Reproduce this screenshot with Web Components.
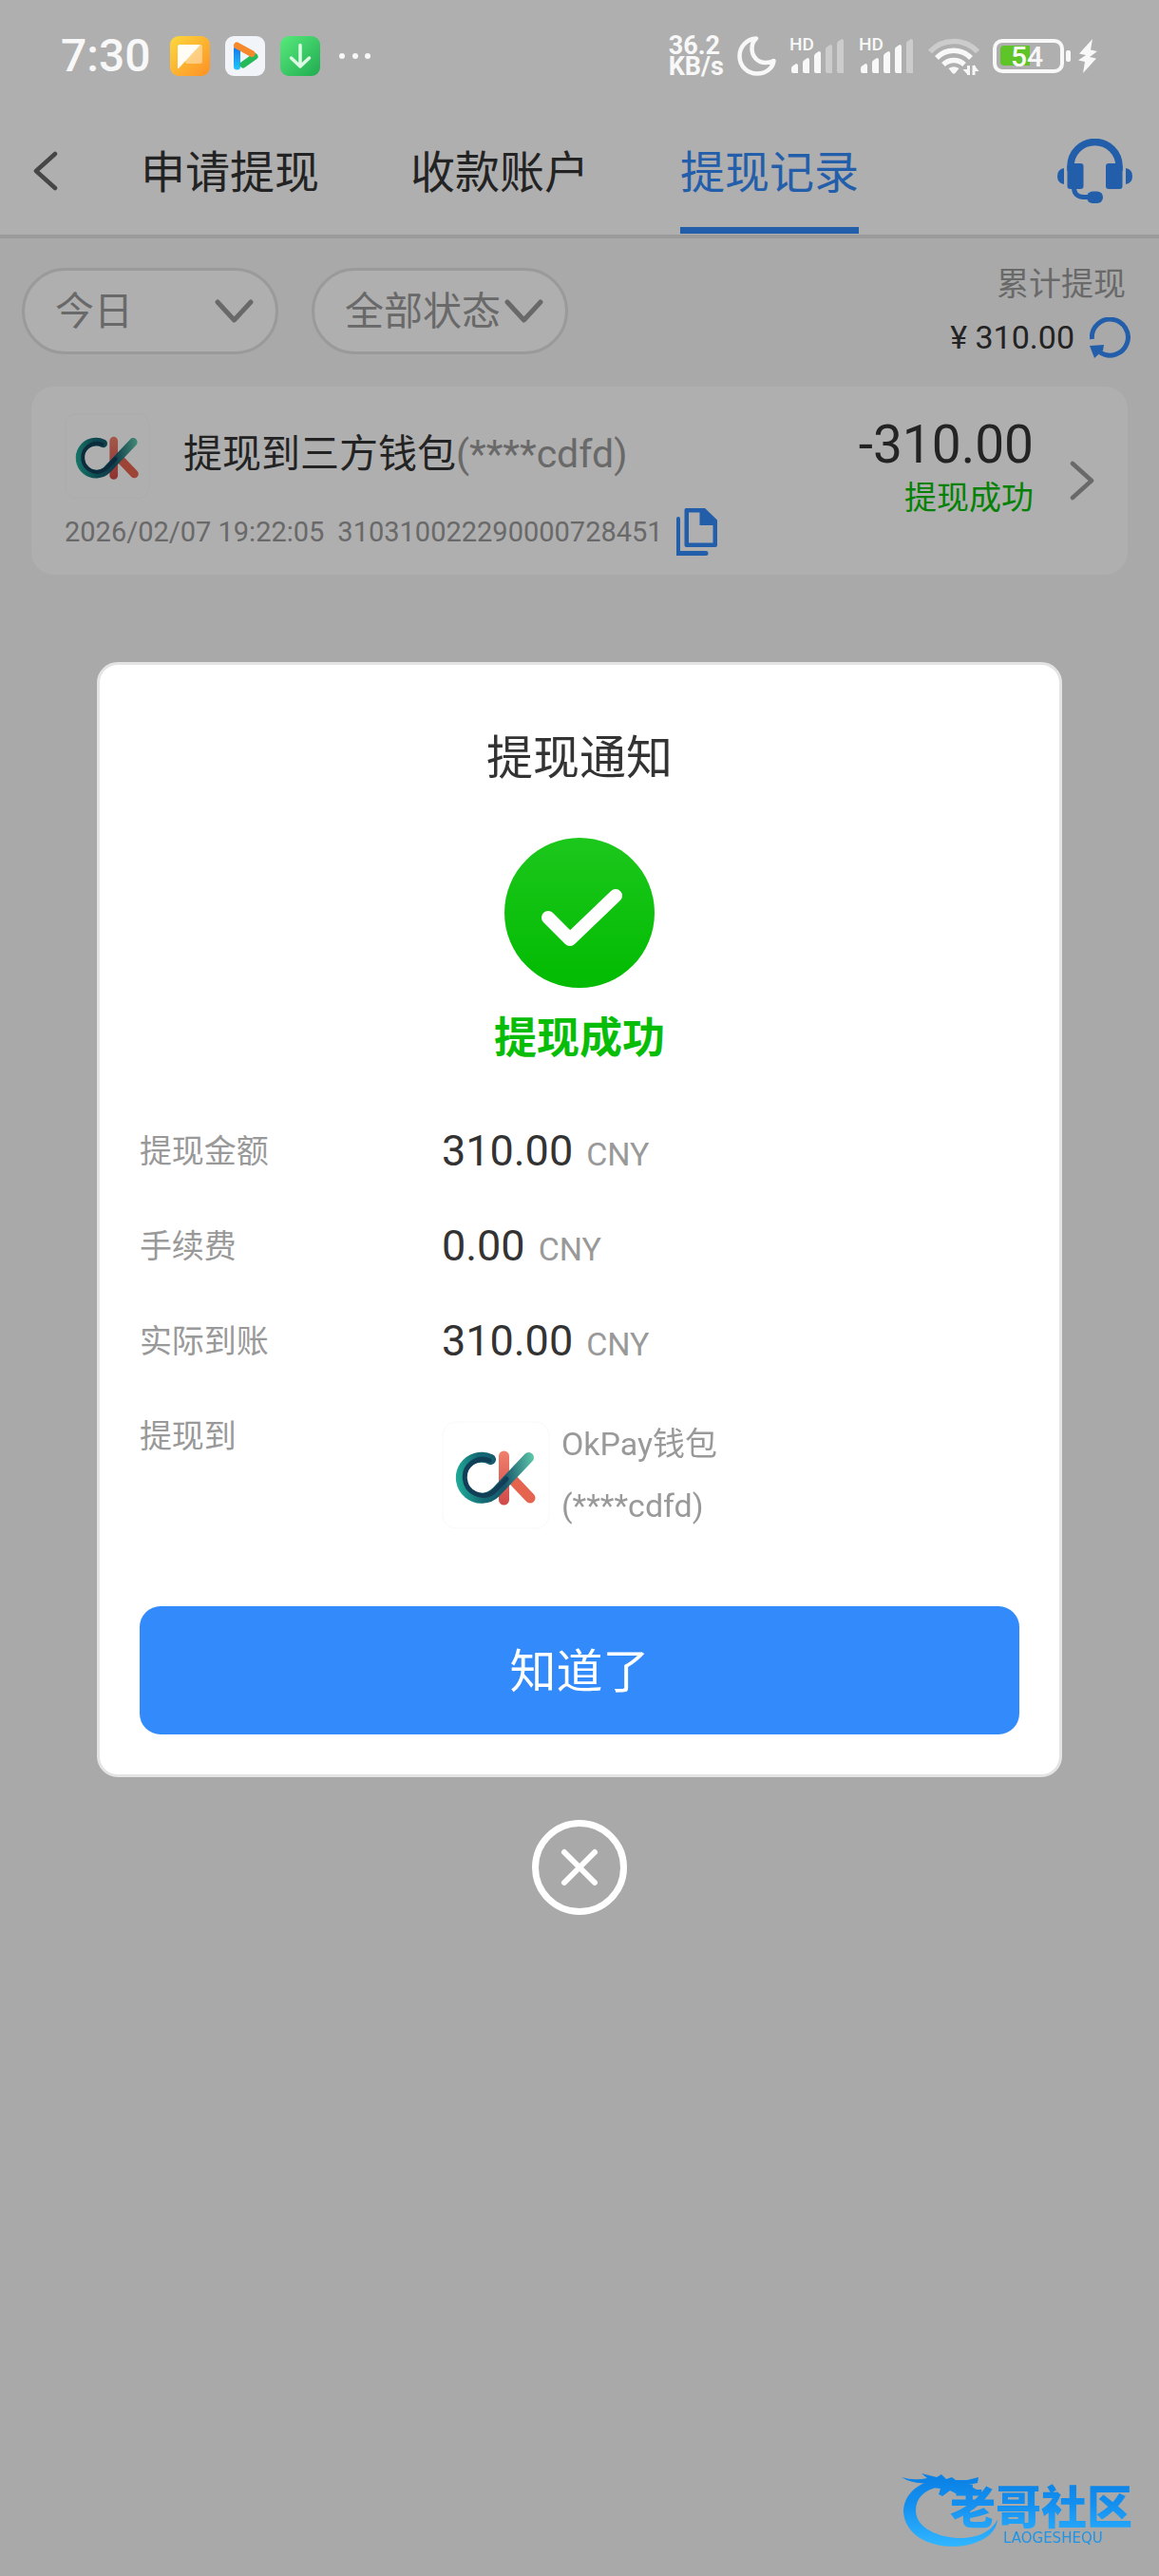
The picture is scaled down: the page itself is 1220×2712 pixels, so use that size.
<!DOCTYPE html>
<html lang="zh-CN">
<head>
<meta charset="utf-8">
<meta name="viewport" content="width=device-width, initial-scale=1">
<title>提现记录</title>
<style>
    :root {
        --blue: #338afa;
        --green: #08bd08;
        --dark: #333;
        --gray: #999;
        --line: #e1e1e1;
    }
    body {
        margin: 0;
        min-height: 100vh;
        background: #f7f7f7;
        color: var(--dark);
        font-family: Roboto, "Noto Sans CJK SC", sans-serif;
        font-size: 34px;
    }
</style>
</head>
<body>

<status-bar time="7:30"></status-bar>
<nav-header>
    <nav-tab href="#apply">申请提现</nav-tab>
    <nav-tab href="#account">收款账户</nav-tab>
    <nav-tab href="#records" active>提现记录</nav-tab>
</nav-header>
<main>
    <filter-bar>
        <pill-select label="时间" options="今日,昨日,近七日"></pill-select>
        <pill-select label="状态" options="全部状态,提现成功,提现失败"></pill-select>
        <total-amount slot="total" label="累计提现">¥ 310.00</total-amount>
    </filter-bar>
    <record-card>
        <span slot="title">提现到三方钱包</span>
        <span slot="account">(****cdfd)</span>
        <span slot="time">2026/02/07 19:22:05</span>
        <span slot="number">310310022290000728451</span>
        <span slot="amount">-310.00</span>
        <span slot="status">提现成功</span>
    </record-card>
</main>
<notice-dialog heading="提现通知" status="提现成功" action="知道了">
    <detail-row label="提现金额">310.00<span slot="unit">CNY</span></detail-row>
    <detail-row label="手续费">0.00<span slot="unit">CNY</span></detail-row>
    <detail-row label="实际到账">310.00<span slot="unit">CNY</span></detail-row>
    <wallet-row label="提现到">OkPay钱包<span slot="account">(****cdfd)</span></wallet-row>
</notice-dialog>
<site-mark></site-mark>

<script>
/* base: every element renders one template into an open root */
class UiElement extends HTMLElement {
    constructor() {
        super();
        this.attachShadow({mode:'open'});
    }
    connectedCallback() {
        this.shadowRoot.innerHTML = this.render();
    }
    attr(name) {
        return this.getAttribute(name) || '';
    }
}

/* status bar */
class SignalBars extends UiElement {
    render() {
        const level = Number(this.attr('level'));
        const tops = [28, 22, 15, 8, 2];
        const bars = tops.map((top, i) => {
            const x = 2 + i * 12;
            return `<path opacity="${i < level ? 1 : .4}" d="M${x} ${top + 5}q0 -2 2 -3l3 -2q2 0 2 2V38h-5q-2 0 -2 -2z"/>`;
        }).join('');
        return `
        <style>
            :host { display: block; }
            svg { display: block; }
            text { font: 500 19px Roboto, sans-serif; }
        </style>
        <svg width="59" height="52" viewBox="0 -6 59 52" fill="#f8f8f8">${bars}<text x="0" y="14">HD</text></svg>
        `;
    }
}
customElements.define('signal-bars', SignalBars);

class StatusBar extends UiElement {
    render() {
        return `
        <style>
            :host {
                display: flex;
                align-items: center;
                justify-content: space-between;
                box-sizing: border-box;
                height: 113px;
                padding: 5px 65px 0 64px;
                position: relative;
                z-index: 3;
                color: #f8f8f8;
                background: #afafaf;
            }
            svg { display: block; }
            .left { display: flex; align-items: center; gap: 16px; }
            .time { font-size: 48px; font-weight: 500; line-height: 56px; margin-right: 4px; }
            .more { margin-left: 4px; }
            .right { display: flex; align-items: center; gap: 14px; }
            .speed { font-size: 27px; font-weight: 700; line-height: 22px; }
            .power { display: flex; align-items: center; gap: 8px; }
            .power text { font: 500 30px Roboto, sans-serif; }
        </style>
        <div class="left">
            <span class="time">${this.attr('time')}</span>
            <svg width="42" height="42" viewBox="0 0 42 42">
                <defs><linearGradient id="o" x1="0" y1="0" x2="1" y2="1"><stop offset="0" stop-color="#fcd83e"/><stop offset="1" stop-color="#fd9025"/></linearGradient></defs>
                <rect width="42" height="42" rx="9" fill="url(#o)"/>
                <path d="M10 9h22q2 0 2 2v16q0 2 -2 2H17z" fill="#fff" opacity=".4"/>
                <path d="M9 9H32L9 34Q8 35 8 33V11Q8 9 10 9z" fill="#fffdf5"/>
            </svg>
            <svg width="42" height="42" viewBox="0 0 42 42">
                <defs><linearGradient id="b" gradientUnits="userSpaceOnUse" x1="0" y1="12" x2="0" y2="35"><stop offset="0" stop-color="#1479ee"/><stop offset="1" stop-color="#20c4fb"/></linearGradient></defs>
                <rect width="42" height="42" rx="9" fill="#f1f4f8"/>
                <g fill="none" stroke-width="7" stroke-linecap="round" stroke-linejoin="round">
                    <path d="M12.500 14V32" stroke="url(#b)"/>
                    <path d="M19 30L31 21.500" stroke="#25b95a"/>
                    <path d="M12.500 10L28 18.500" stroke="#f6892b"/>
                </g>
            </svg>
            <svg width="42" height="42" viewBox="0 0 42 42">
                <defs><linearGradient id="g" x1="0" y1="0" x2="1" y2="1"><stop offset="0" stop-color="#58ea7c"/><stop offset="1" stop-color="#20ab50"/></linearGradient></defs>
                <rect width="42" height="42" rx="9" fill="url(#g)"/>
                <path d="M21 9.500V32M11.500 23L21 32L30.500 23" fill="none" stroke="#dcfbe4" stroke-width="3.500" stroke-linecap="round" stroke-linejoin="round"/>
            </svg>
            <svg class="more" width="34" height="8" fill="#f8f8f8"><circle cx="3" cy="4" r="3"/><circle cx="17" cy="4" r="3"/><circle cx="30" cy="4" r="3"/></svg>
        </div>
        <div class="right">
            <div class="speed">36.2<br>KB/s</div>
            <svg width="41" height="42" viewBox="0 0 41 42" fill="none" stroke="#f8f8f8" stroke-width="4.500" stroke-linejoin="round">
                <path d="M20 2.500C10 3 2.500 11 2.500 21C2.500 32 11 39.500 21 39.500C30 39.500 37.500 34 38.500 26C36 27.500 33 28 30 28C21 28 15.500 21 15.500 13C15.500 8.500 17 5 20 2.500Z"/>
            </svg>
            <signal-bars level="3"></signal-bars>
            <signal-bars level="4"></signal-bars>
            <svg width="54" height="40" viewBox="0 0 54 40" fill="none" stroke="#f8f8f8" stroke-width="5.500">
                <path opacity=".4" d="M2 15.500A34 34 0 0 1 52 15.500"/>
                <path d="M9 22A25 25 0 0 1 45 22"/>
                <path d="M16 29A15.500 15.500 0 0 1 38 29"/>
                <path d="M21.500 33Q27 29.500 32.500 33L28.500 38Q27 39.500 25.500 38z" fill="#f8f8f8" stroke="none"/>
                <path d="M42.500 30V40M48 40V30" stroke-width="3"/>
                <path d="M36.500 34H42V40zM48 29L53.500 36H48z" fill="#f8f8f8" stroke="none"/>
            </svg>
            <div class="power">
                <svg width="82" height="36" viewBox="0 0 82 36">
                    <rect x="2" y="2" width="71" height="32" rx="8" fill="none" stroke="#f8f8f8" stroke-width="4"/>
                    <path d="M12 7H39V28H12Q8 28 8 24V11Q8 7 12 7z" fill="#5fc427"/>
                    <rect x="77" y="12" width="5" height="12" rx="2" fill="#f8f8f8"/>
                    <text x="19" y="29" fill="#f8f8f8">54</text>
                </svg>
                <svg width="20" height="36" viewBox="0 0 20 36" fill="#f8f8f8"><path d="M15 0L1 15.500L8 17L0 22.500L7 24L5 36L19 20.500L12 19L20 13L13 11.500z"/></svg>
            </div>
        </div>
        `;
    }
}
customElements.define('status-bar', StatusBar);

/* header with tabs */
class NavTab extends UiElement {
    render() {
        return `
        <style>
            :host { display: flex; }
            a {
                display: flex;
                align-items: center;
                padding-top: 2px;
                margin-bottom: 1px;
                border-bottom: 7px solid transparent;
                font-size: 47px;
                color: var(--dark);
                text-decoration: none;
                white-space: nowrap;
            }
            :host([active]) a {
                color: var(--blue);
                border-color: var(--blue);
            }
        </style>
        <a href="${this.attr('href')}"><slot></slot></a>
        `;
    }
}
customElements.define('nav-tab', NavTab);

class NavHeader extends UiElement {
    render() {
        return `
        <style>
            :host {
                display: flex;
                align-items: center;
                justify-content: space-between;
                height: 134px;
                padding: 0 28px 0 35px;
                background: #fff;
                border-bottom: 4px solid var(--line);
            }
            button { border: 0; padding: 0; background: none; display: block; }
            svg { display: block; }
            .left { display: flex; align-items: center; gap: 87px; align-self: stretch; }
            nav { display: flex; gap: 96px; align-self: stretch; }
        </style>
        <div class="left">
            <button aria-label="返回">
                <svg width="26" height="42" viewBox="0 0 26 42" fill="none" stroke="#666" stroke-width="4.500" stroke-linecap="round" stroke-linejoin="round"><path d="M23 3L3 21L23 39"/></svg>
            </button>
            <nav><slot></slot></nav>
        </div>
        <button aria-label="客服">
            <svg width="79" height="68" viewBox="0 0 79 68" fill="#338afa">
                <path d="M14 34V29A25.500 25.500 0 0 1 65 29V34" fill="none" stroke="#338afa" stroke-width="7.500"/>
                <rect x="10.500" y="26" width="17" height="27" rx="3"/>
                <rect x="51" y="26" width="17.500" height="27" rx="3"/>
                <path d="M7 31V48Q0 47 0 39.500Q0 32 7 31zM72 31V48Q79 47 79 39.500Q79 32 72 31z"/>
                <path d="M17.500 50Q17 61.500 28 61.500H36" fill="none" stroke="#338afa" stroke-width="5"/>
                <rect x="31" y="55.500" width="17" height="12.500" rx="6"/>
            </svg>
        </button>
        `;
    }
}
customElements.define('nav-header', NavHeader);

/* filters */
class PillSelect extends UiElement {
    render() {
        const options = this.attr('options').split(',').map(o => `<option>${o}</option>`).join('');
        return `
        <style>
            :host { display: grid; width: 270px; }
            select, svg { grid-area: 1/1; }
            select {
                appearance: none;
                box-sizing: border-box;
                width: 100%;
                height: 91px;
                padding: 0 0 0 32px;
                border: 3px solid var(--line);
                border-radius: 46px;
                background: #fff;
                color: var(--gray);
                font-family: inherit;
                font-size: 41px;
            }
            svg {
                place-self: center end;
                margin-right: 26px;
                pointer-events: none;
            }
        </style>
        <select aria-label="${this.attr('label')}">${options}</select>
        <svg width="41" height="26" viewBox="0 0 41 26" fill="none" stroke="#999" stroke-width="5" stroke-linecap="round" stroke-linejoin="round"><path d="M3 3L20.500 22L38 3"/></svg>
        `;
    }
}
customElements.define('pill-select', PillSelect);

class TotalAmount extends UiElement {
    render() {
        return `
        <style>
            :host { display: flex; flex-direction: column; align-items: flex-end; gap: 18px; }
            .label { color: var(--gray); line-height: 34px; padding-right: 5px; }
            .sum { display: flex; align-items: center; gap: 16px; line-height: 43px; }
            button { border: 0; padding: 0; background: none; }
            svg { display: block; }
        </style>
        <div class="label">${this.attr('label')}</div>
        <div class="sum">
            <span><slot></slot></span>
            <button aria-label="刷新">
                <svg width="43" height="43" viewBox="0 0 43 43" fill="none" stroke="#338afa" stroke-width="5"><path d="M2.500 23A19 19 0 1 1 11 37"/><path d="M0 30L15 29L14 35L5 43z" fill="#338afa" stroke="none"/></svg>
            </button>
        </div>
        `;
    }
}
customElements.define('total-amount', TotalAmount);

class FilterBar extends UiElement {
    render() {
        return `
        <style>
            :host {
                display: flex;
                justify-content: space-between;
                align-items: flex-start;
                padding: 31px 30px 30px 23px;
            }
            .filters { display: flex; gap: 35px; }
        </style>
        <div class="filters"><slot></slot></div>
        <slot name="total"></slot>
        `;
    }
}
customElements.define('filter-bar', FilterBar);

/* wallet logo */
class WalletLogo extends UiElement {
    render() {
        return `
        <style>
            :host { display: block; flex: none; }
            svg { display: block; width: 100%; }
        </style>
        <svg viewBox="0 0 114 114" fill="none" stroke-linecap="round">
            <defs>
                <linearGradient id="t" gradientUnits="userSpaceOnUse" x1="15" y1="50" x2="96" y2="40">
                    <stop offset="0" stop-color="#1fa896"/><stop offset=".3" stop-color="#146a74"/><stop offset=".6" stop-color="#17566b"/><stop offset="1" stop-color="#5cc4a8"/>
                </linearGradient>
                <linearGradient id="r" gradientUnits="userSpaceOnUse" x1="65" y1="32" x2="65" y2="90">
                    <stop offset="0" stop-color="#f0806c"/><stop offset="1" stop-color="#cf4848"/>
                </linearGradient>
            </defs>
            <rect x="1" y="1" width="112" height="112" rx="14" stroke="#f9f9f9"/>
            <path d="M65.500 37V83" stroke="url(#r)" stroke-width="11"/>
            <path d="M74 61L93 81" stroke="#e5644f" stroke-width="11"/>
            <path d="M51.500 40.500A21.500 21.500 0 1 0 57 75L91.500 38.500" stroke="url(#t)" stroke-width="11"/>
            <path d="M50 41.500A19 19 0 1 0 54 75L68 61" stroke="#123f58" stroke-width="5"/>
        </svg>
        `;
    }
}
customElements.define('wallet-logo', WalletLogo);

/* one withdrawal */
class RecordCard extends UiElement {
    render() {
        return `
        <style>
            :host {
                display: flex;
                margin: 0 33px;
                padding: 0 35px;
                border-radius: 24px;
                background: #fff;
            }
            .main { flex: 1; padding: 28px 0 20px; }
            .title { display: flex; align-items: center; gap: 35px; font-size: 41px; }
            .name { display: flex; align-items: baseline; padding-bottom: 4px; line-height: 60px; }
            wallet-logo { width: 90px; }
            .account, .meta { color: var(--gray); }
            .meta { display: flex; align-items: center; gap: 14px; margin-top: 10px; font-size: 29px; }
            button { border: 0; padding: 0; background: none; }
            svg { display: block; }
            .side { padding-top: 28px; text-align: right; }
            .amount { font-size: 55px; line-height: 66px; }
            .status { color: var(--green); line-height: 46px; }
            .go { margin-left: 38px; align-self: center; }
        </style>
        <div class="main">
            <div class="title">
                <wallet-logo></wallet-logo>
                <div class="name"><slot name="title"></slot><span class="account"><slot name="account"></slot></span></div>
            </div>
            <div class="meta">
                <slot name="time"></slot>
                <slot name="number"></slot>
                <button aria-label="复制">
                    <svg width="43" height="50" viewBox="0 0 43 50" fill="#338afa">
                        <path fill-rule="evenodd" d="M10 0H30L43 12.500V39Q43 41 41 41H10.500Q8.500 41 8.500 39V2Q8.500 0 10 0zM13 4.500V36.500H38.500V18H24.500V4.500z"/>
                        <path d="M0 11Q0 9 2 9T4 11V45H31Q33.500 45 33.500 47.500T31 50H0z"/>
                    </svg>
                </button>
            </div>
        </div>
        <div class="side">
            <div class="amount"><slot name="amount"></slot></div>
            <div class="status"><slot name="status"></slot></div>
        </div>
        <button class="go" aria-label="详情">
            <svg width="26" height="42" viewBox="0 0 26 42" fill="none" stroke="#999" stroke-width="4.500" stroke-linecap="round" stroke-linejoin="round"><path d="M3 3L23 21L3 39"/></svg>
        </button>
        `;
    }
}
customElements.define('record-card', RecordCard);

/* rows of the dialog */
class DetailRow extends UiElement {
    render() {
        return `
        <style>
            :host { display: grid; grid-template-columns: 318px 1fr; align-items: center; }
            .label, .unit { color: var(--gray); }
            .label { line-height: 100px; }
            .value { display: flex; align-items: baseline; gap: 14px; padding-top: 4px; line-height: 60px; }
            .number { font-size: 45px; }
        </style>
        <div class="label">${this.attr('label')}</div>
        <div class="value">
            <span class="number"><slot></slot></span>
            <span class="unit"><slot name="unit"></slot></span>
        </div>
        `;
    }
}
customElements.define('detail-row', DetailRow);

class WalletRow extends UiElement {
    render() {
        return `
        <style>
            :host { display: grid; grid-template-columns: 318px 1fr; color: var(--gray); }
            .label { line-height: 100px; }
            .wallet { display: flex; align-items: center; gap: 12px; padding-top: 26px; line-height: 65px; }
            wallet-logo { width: 114px; }
        </style>
        <div class="label">${this.attr('label')}</div>
        <div class="wallet">
            <wallet-logo></wallet-logo>
            <div>
                <div><slot></slot></div>
                <div><slot name="account"></slot></div>
            </div>
        </div>
        `;
    }
}
customElements.define('wallet-row', WalletRow);

/* dialog over the dimmed page */
class NoticeDialog extends UiElement {
    render() {
        return `
        <style>
            :host {
                position: fixed;
                inset: 0;
                z-index: 2;
                display: flex;
                flex-direction: column;
                align-items: center;
                justify-content: center;
                gap: 45px;
                background: rgba(0, 0, 0, .315);
            }
            section {
                display: flex;
                flex-direction: column;
                box-sizing: border-box;
                width: 83.300%;
                padding: 64px 42px 42px;
                border: 3px solid #e4e4e4;
                border-radius: 22px;
                background: #fff;
            }
            h2 {
                margin: 0 0 48px;
                font-size: 49px;
                font-weight: 400;
                line-height: 70px;
                text-align: center;
            }
            svg { display: block; }
            .tick { align-self: center; }
            .status {
                margin: 24px 0 38px;
                color: var(--green);
                font-size: 45px;
                font-weight: 700;
                line-height: 60px;
                text-align: center;
            }
            .ok {
                height: 135px;
                margin-top: 73px;
                padding: 0 0 6px;
                border: 0;
                border-radius: 22px;
                background: var(--blue);
                color: #fff;
                font-family: inherit;
                font-size: 49px;
            }
            .close { border: 0; padding: 0; background: none; }
        </style>
        <section role="dialog" aria-modal="true" aria-labelledby="heading">
            <h2 id="heading">${this.attr('heading')}</h2>
            <svg class="tick" width="158" height="158" viewBox="0 0 158 158">
                <defs><linearGradient id="c" x1="0" y1="0" x2="0" y2="1"><stop offset="0" stop-color="#1cc71c"/><stop offset="1" stop-color="#02bb02"/></linearGradient></defs>
                <circle cx="79" cy="79" r="79" fill="url(#c)"/>
                <path d="M46 84L69 107L117 61" fill="none" stroke="#fff" stroke-width="14" stroke-linecap="round" stroke-linejoin="round"/>
            </svg>
            <div class="status">${this.attr('status')}</div>
            <slot></slot>
            <button class="ok">${this.attr('action')}</button>
        </section>
        <button class="close" aria-label="关闭">
            <svg width="100" height="100" viewBox="0 0 100 100" fill="none" stroke="#fff" stroke-linecap="round">
                <circle cx="50" cy="50" r="46.500" stroke-width="7"/>
                <path d="M34 34L66 66M66 34L34 66" stroke-width="6"/>
            </svg>
        </button>
        `;
    }
}
customElements.define('notice-dialog', NoticeDialog);

/* community mark in the corner */
class SiteMark extends UiElement {
    render() {
        return `
        <style>
            :host { position: fixed; right: 0; bottom: 0; z-index: 4; }
            svg { display: block; }
            .name { font: 900 48px "Noto Sans CJK SC", sans-serif; }
            .latin { font: 15px "DejaVu Sans", sans-serif; }
        </style>
        <svg width="300" height="132" viewBox="0 0 300 132" fill="url(#m)">
            <defs><linearGradient id="m" gradientUnits="userSpaceOnUse" x1="0" y1="30" x2="0" y2="98"><stop offset="0" stop-color="#0b82e6"/><stop offset=".4" stop-color="#1490f0"/><stop offset="1" stop-color="#2fb4ff"/></linearGradient></defs>
            <path d="M62 31C42 36 31 49 31 65C33 88 56 101 84 101C110 100 129 89 130 72C124 86 107 93 87 92C62 90 44 79 44 63C44 50 52 42 68 38z"/>
            <path d="M29 28Q42 32 56 29L50 24L66 28L71 25L76 30L82 28L86 31L98 31L110 28L109 34L99 36L108 41L106 44L94 42L86 45L80 42L72 48L68 46L70 40L62 39L54 34Q40 35 29 28z"/>
            <text class="name" x="80" y="77">老哥社区</text>
            <text class="latin" x="136" y="97" fill="#1d94e8">LAOGESHEQU</text>
        </svg>
        `;
    }
}
customElements.define('site-mark', SiteMark);
</script>
</body>
</html>
